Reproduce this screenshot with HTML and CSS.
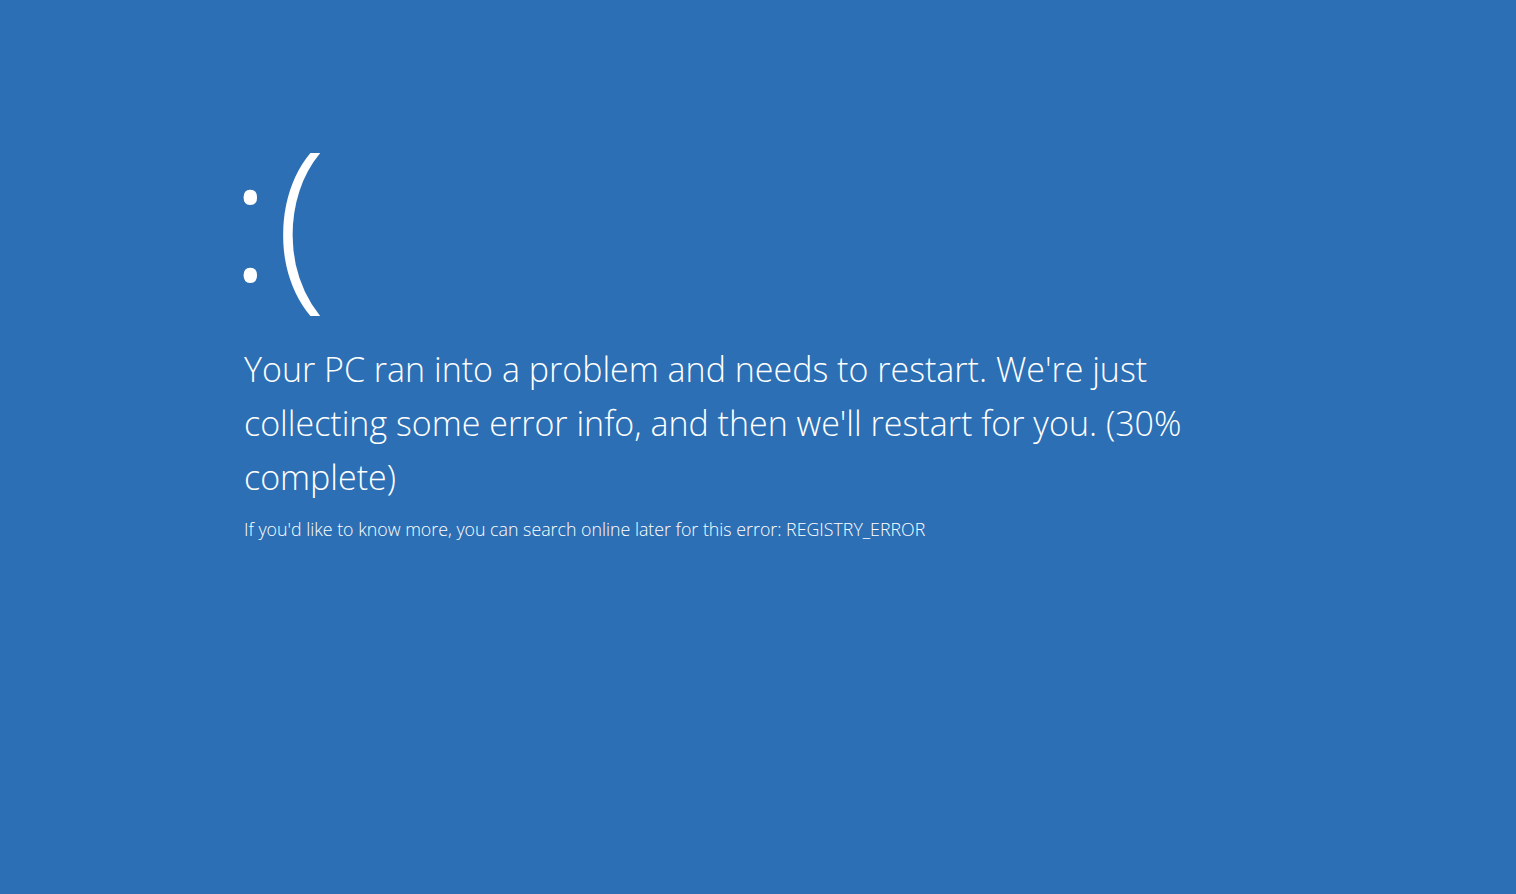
FILE: index.html
```html
<!DOCTYPE html>
<html lang="en">
<head>
  <meta charset="UTF-8" />
  <title>Your PC ran into a problem</title>
  <link rel="stylesheet" href="styles.css">
</head>
<body>
<div class="screen">
  <div class="face">:<span class="frown">(</span></div>
  <p class="message">Your PC ran into a problem and needs to restart. We're just collecting some error info, and then we'll restart for you. (30% complete)</p>
  <p class="detail">If you'd like to know more, you can search online later for this error: REGISTRY_ERROR</p>
</div>
</body>
</html>
```

FILE: styles.css
```css
html, body {
  margin: 0;
  height: 100%;
}
body {
  background-color: #2c6fb5;
  color: #fff;
  font-family: "Open Sans", "Noto Sans", sans-serif;
  font-weight: 300;
}
.screen {
  padding: 104px 0 0 244px;
  width: 950px;
}
.face {
  margin-left: -14px;
  font-size: 170px;
  line-height: 220px;
}
.frown {
  font-size: 187px;
  margin-left: 5px;
  vertical-align: -5px;
}
.message {
  margin: 17px 0 0;
  font-size: 34px;
  line-height: 54px;
}
.detail {
  margin: 13px 0 0;
  font-size: 17.8px;
  line-height: 24px;
}
```
